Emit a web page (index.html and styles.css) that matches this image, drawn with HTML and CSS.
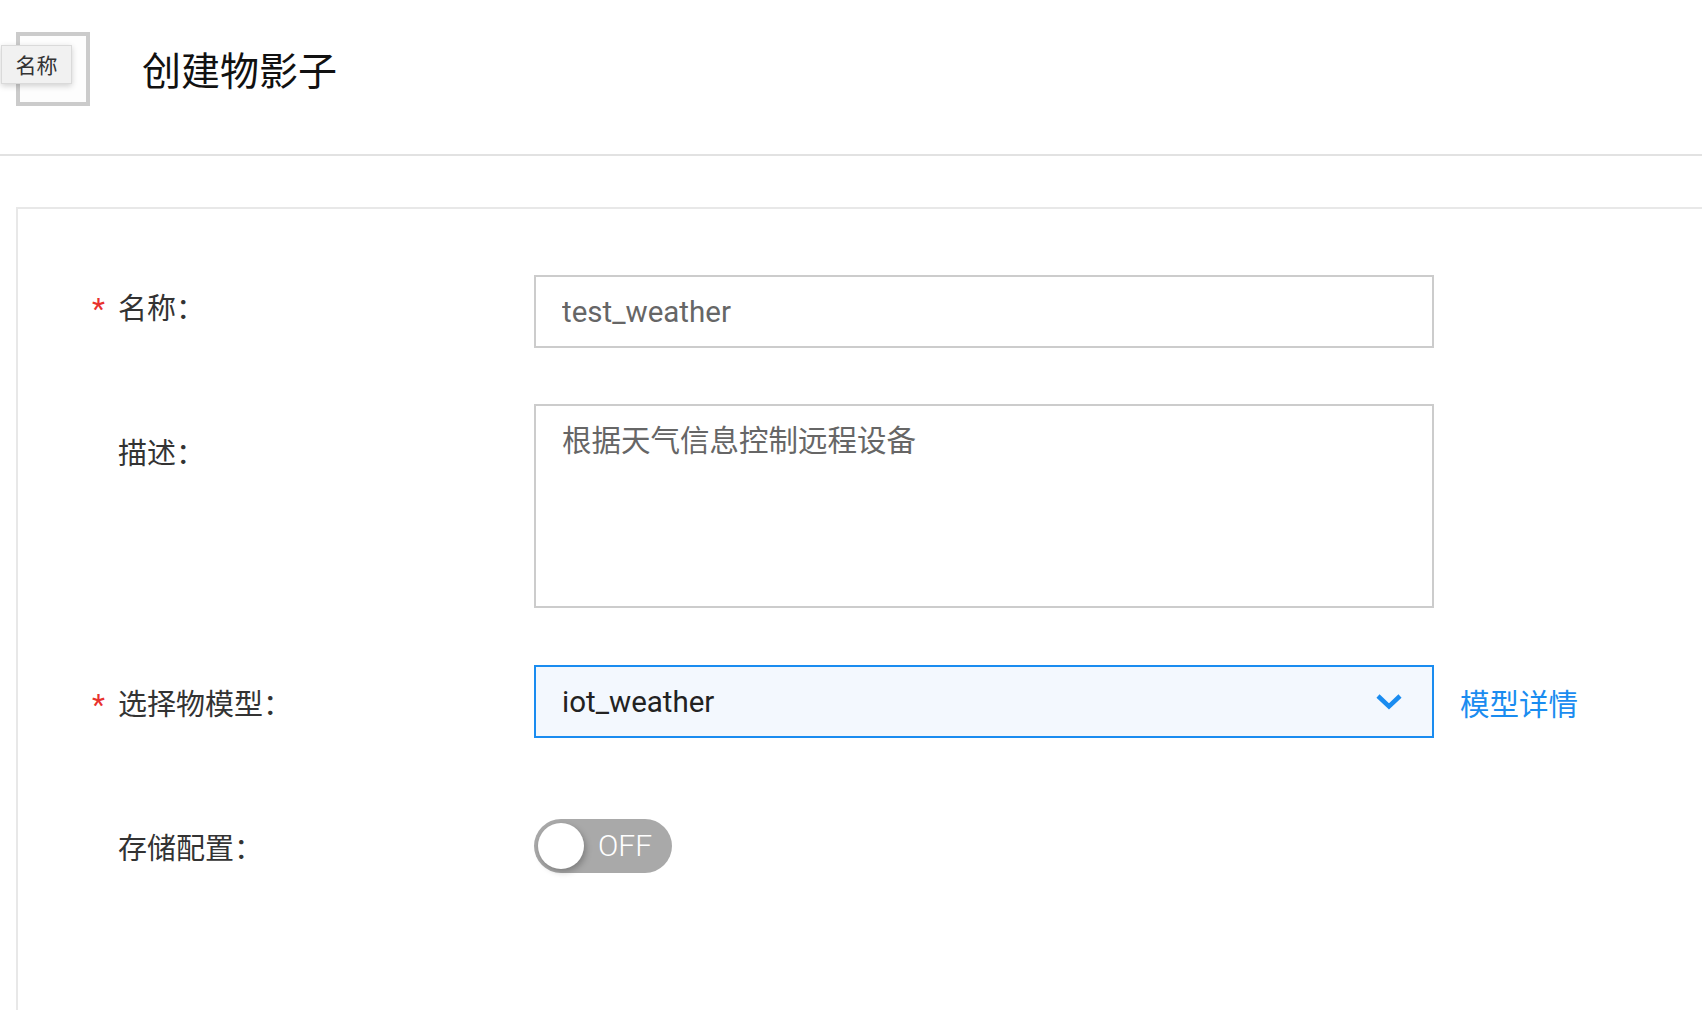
FILE: index.html
```html
<!DOCTYPE html>
<html lang="zh-CN">
<head>
<meta charset="utf-8">
<title>创建物影子</title>
<link rel="stylesheet" href="styles.css">
</head>
<body>
<header class="header">
  <div class="thumb">
    <div class="tooltip">名称</div>
  </div>
  <h1 class="title">创建物影子</h1>
</header>
<main class="card">
  <div class="row row-name">
    <label class="label label-name"><span class="req">*</span>名称：</label>
    <input class="input" type="text" value="test_weather">
  </div>
  <div class="row row-desc">
    <label class="label label-desc"><span class="req"></span>描述：</label>
    <textarea class="textarea">根据天气信息控制远程设备</textarea>
  </div>
  <div class="row row-center row-model">
    <label class="label"><span class="req">*</span>选择物模型：</label>
    <div class="select">
      <span class="select-value">iot_weather</span>
      <svg class="chevron" width="28" height="17" viewBox="0 0 28 17"><path d="M3 3 L14 13.5 L25 3" fill="none" stroke="#1a8cf0" stroke-width="4.5" stroke-linecap="butt" stroke-linejoin="miter"/></svg>
    </div>
    <a class="link" href="#">模型详情</a>
  </div>
  <div class="row row-center row-store">
    <label class="label"><span class="req"></span>存储配置：</label>
    <div class="switch">
      <span class="knob"></span>
      <span class="switch-text">OFF</span>
    </div>
  </div>
</main>
</body>
</html>
```
FILE: styles.css
```css
html, body {
  margin: 0;
  padding: 0;
  background: #fff;
}
body {
  font-family: Roboto, "Noto Sans CJK SC", "Noto Sans", sans-serif;
  color: #333;
  height: 1010px;
  overflow: hidden;
}
.header {
  box-sizing: border-box;
  height: 156px;
  border-bottom: 2px solid #e2e2e2;
  display: flex;
  align-items: flex-start;
  padding: 32px 0 0 16px;
}
.thumb {
  position: relative;
  box-sizing: border-box;
  width: 74px;
  height: 74px;
  border: 4px solid #cbcbcb;
  background: #fdfdfd;
  flex: none;
}
.tooltip {
  position: absolute;
  left: -19px;
  top: 9px;
  box-sizing: border-box;
  width: 71px;
  height: 39px;
  line-height: 37px;
  text-align: center;
  font-family: "Noto Sans CJK SC", sans-serif;
  font-size: 21px;
  color: #333;
  background: #f1f1f1;
  border: 1px solid #dadada;
  box-shadow: 0 2px 6px rgba(0, 0, 0, 0.18);
}
.title {
  margin: 0 0 0 52px;
  font-family: "Noto Sans CJK SC", sans-serif;
  font-weight: 400;
  font-size: 39px;
  color: #111;
  height: 72px;
  line-height: 72px;
}
.card {
  box-sizing: border-box;
  margin: 51px 0 0 16px;
  border-top: 2px solid #e8e8e8;
  border-left: 2px solid #e8e8e8;
  padding-top: 66px;
  height: 803px;
}
.row {
  display: flex;
  align-items: flex-start;
}
.row-center {
  align-items: center;
}
.row-name { margin-bottom: 56px; }
.row-desc { margin-bottom: 57px; }
.row-store { margin-top: 81px; }
.label {
  box-sizing: border-box;
  width: 516px;
  flex: none;
  padding-left: 74px;
  display: flex;
  align-items: center;
  height: 30px;
  line-height: 30px;
  font-family: "Noto Sans CJK SC", sans-serif;
  font-size: 29px;
  color: #333;
}
.label-name { margin-top: 16px; }
.label-desc { margin-top: 32px; }
.req {
  width: 26px;
  flex: none;
  color: #e8322d;
  font-family: Roboto, sans-serif;
  font-size: 30px;
  line-height: 30px;
  position: relative;
  top: 3px;
}
.input, .textarea {
  box-sizing: border-box;
  width: 900px;
  border: 2px solid #cccccc;
  border-radius: 0;
  background: #fff;
  color: #666;
  font-family: Roboto, "Noto Sans CJK SC", sans-serif;
  font-size: 29.5px;
  padding: 0 0 0 26px;
  margin: 0;
  outline: none;
}
.input {
  height: 73px;
}
.textarea {
  height: 204px;
  padding-top: 12px;
  line-height: 41px;
  resize: none;
  font-family: "Noto Sans CJK SC", sans-serif;
  font-size: 29.5px;
}
.select {
  box-sizing: border-box;
  width: 900px;
  height: 73px;
  border: 2px solid #1a8cf0;
  background: #f3f8fe;
  display: flex;
  align-items: center;
  justify-content: space-between;
  padding: 0 29px 0 26px;
  color: #222;
  font-size: 29.5px;
}
.chevron {
  display: block;
}
.link {
  margin-left: 26px;
  color: #1a8cf0;
  text-decoration: none;
  font-family: "Noto Sans CJK SC", sans-serif;
  font-size: 29.5px;
}
.switch {
  box-sizing: border-box;
  width: 138px;
  height: 54px;
  border-radius: 27px;
  background: #a9a9a9;
  display: flex;
  align-items: center;
  padding-left: 4px;
}
.knob {
  width: 46px;
  height: 46px;
  border-radius: 50%;
  background: #fff;
  box-shadow: 2px 3px 6px rgba(0, 0, 0, 0.25);
  flex: none;
}
.switch-text {
  margin-left: 14px;
  color: #fff;
  font-size: 30px;
  font-weight: 300;
  line-height: 1;
}
```
